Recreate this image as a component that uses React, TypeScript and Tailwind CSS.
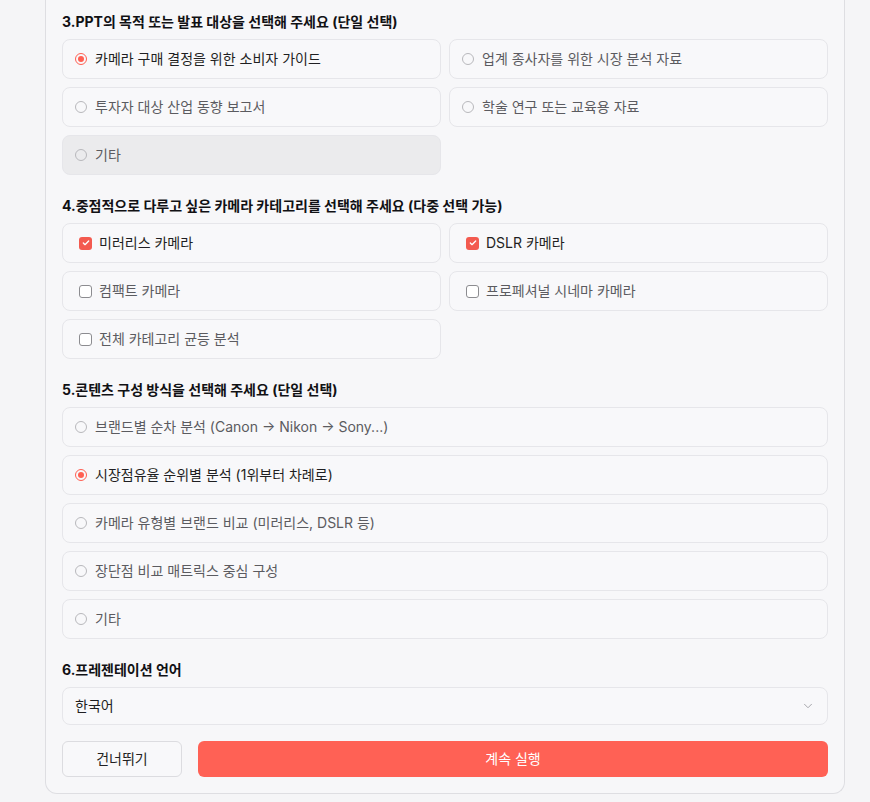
import { ChevronDown, Check } from "lucide-react";

type Opt = { label: string; checked?: boolean; muted?: boolean };

const purposeOpts: Opt[] = [
  { label: "카메라 구매 결정을 위한 소비자 가이드", checked: true },
  { label: "업계 종사자를 위한 시장 분석 자료" },
  { label: "투자자 대상 산업 동향 보고서" },
  { label: "학술 연구 또는 교육용 자료" },
  { label: "기타", muted: true },
];

const categoryOpts: Opt[] = [
  { label: "미러리스 카메라", checked: true },
  { label: "DSLR 카메라", checked: true },
  { label: "컴팩트 카메라" },
  { label: "프로페셔널 시네마 카메라" },
  { label: "전체 카테고리 균등 분석" },
];

const structureOpts: Opt[] = [
  { label: "브랜드별 순차 분석 (Canon → Nikon → Sony...)" },
  { label: "시장점유율 순위별 분석 (1위부터 차례로)", checked: true },
  { label: "카메라 유형별 브랜드 비교 (미러리스, DSLR 등)" },
  { label: "장단점 비교 매트릭스 중심 구성" },
  { label: "기타" },
];

function Radio({ opt }: { opt: Opt }) {
  return (
    <div
      className={`flex h-10 items-center gap-2 rounded-lg border border-[#e6e6ea] px-3 ${
        opt.muted ? "bg-[#ebebed]" : "bg-[#f8f8fa]"
      }`}
    >
      <span
        className={`flex h-3 w-3 shrink-0 items-center justify-center rounded-full border ${
          opt.checked ? "border-[#ff5f52]" : "border-[#b8b8bc]"
        }`}
      >
        {opt.checked && <span className="h-1.5 w-1.5 rounded-full bg-[#ff5f52]" />}
      </span>
      <span className={`text-sm ${opt.checked ? "text-[#1f1f22]" : "text-[#5b5b60]"}`}>{opt.label}</span>
    </div>
  );
}

function CheckItem({ opt }: { opt: Opt }) {
  return (
    <div className="flex h-10 items-center gap-[7px] rounded-lg border border-[#e6e6ea] bg-[#f8f8fa] pl-4 pr-3">
      {opt.checked ? (
        <span className="flex h-[13px] w-[13px] shrink-0 items-center justify-center rounded-[3px] bg-[#f35a4f]">
          <Check className="h-2 w-2 text-white" strokeWidth={4} />
        </span>
      ) : (
        <span className="h-[13px] w-[13px] shrink-0 rounded-[3px] border border-[#8c8c90] bg-white" />
      )}
      <span className={`text-sm ${opt.checked ? "text-[#1f1f22]" : "text-[#5b5b60]"}`}>{opt.label}</span>
    </div>
  );
}

function Heading({ children }: { children: React.ReactNode }) {
  return <h3 className="mb-[7px] text-sm leading-5 font-bold text-[#111114]">{children}</h3>;
}

export default function App() {
  return (
    <div
      className="min-h-[802px] bg-[#f5f5f7] pl-[45px] pr-[25px]"
      style={{ fontFamily: 'Inter, "Noto Sans CJK KR", sans-serif' }}
    >
      <div className="flex flex-col gap-[21px] rounded-b-xl border-x border-b border-[#dedee2] bg-[#f7f7f9] px-4 pt-3 pb-4">
        <section>
          <Heading>3.PPT의 목적 또는 발표 대상을 선택해 주세요 (단일 선택)</Heading>
          <div className="grid grid-cols-2 gap-2">
            {purposeOpts.map((o) => (
              <Radio key={o.label} opt={o} />
            ))}
          </div>
        </section>

        <section>
          <Heading>4.중점적으로 다루고 싶은 카메라 카테고리를 선택해 주세요 (다중 선택 가능)</Heading>
          <div className="grid grid-cols-2 gap-2">
            {categoryOpts.map((o) => (
              <CheckItem key={o.label} opt={o} />
            ))}
          </div>
        </section>

        <section>
          <Heading>5.콘텐츠 구성 방식을 선택해 주세요 (단일 선택)</Heading>
          <div className="flex flex-col gap-2">
            {structureOpts.map((o) => (
              <Radio key={o.label} opt={o} />
            ))}
          </div>
        </section>

        <section>
          <Heading>6.프레젠테이션 언어</Heading>
          <div className="flex h-[38px] items-center justify-between rounded-lg border border-[#e6e6ea] bg-[#f8f8fa] px-3">
            <span className="text-sm text-[#1f1f22]">한국어</span>
            <ChevronDown className="h-3.5 w-3.5 text-[#9a9aa0]" strokeWidth={1.5} />
          </div>
          <div className="mt-4 flex gap-4">
            <button className="h-9 w-[120px] rounded-md border border-[#dcdce0] bg-[#f8f8fa] text-sm text-[#1f1f22]">
              건너뛰기
            </button>
            <button className="h-9 flex-1 rounded-md bg-[#ff6155] text-sm text-white">계속 실행</button>
          </div>
        </section>
      </div>
    </div>
  );
}
